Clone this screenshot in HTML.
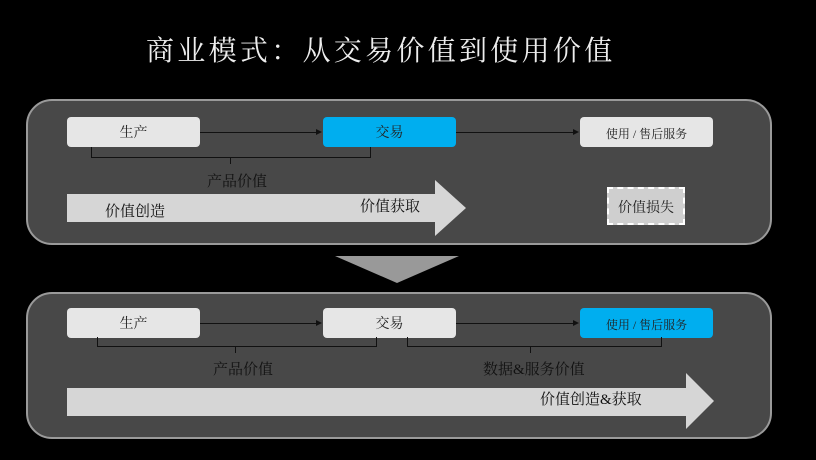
<!DOCTYPE html>
<html><head><meta charset="utf-8"><style>
body{margin:0;width:816px;height:460px;background:#000;position:relative;overflow:hidden;font-family:"Liberation Serif","Noto Serif CJK SC",serif;}
.a{position:absolute}
.title{left:146px;top:34px;width:480px;color:#eee;font-size:28px;letter-spacing:3.3px;line-height:36px;white-space:nowrap}
.panel{background:#484848;border:2px solid #9a9a9a;border-radius:26px}
.box{background:#e6e6e6;border-radius:4px;color:#222;font-size:14px;height:26px;padding-top:4px;width:133px;display:flex;align-items:center;justify-content:center;line-height:1}
.blue{background:#00aeef}
.ln{background:#111}
.t{color:#111;font-size:15px;white-space:nowrap;line-height:20px}
</style></head><body>
<div class="a title">商业模式：从交易价值到使用价值</div>

<div class="a panel" style="left:26px;top:99px;width:742px;height:142px"></div>
<div class="a box" style="left:67px;top:117px">生产</div>
<div class="a box blue" style="left:323px;top:117px">交易</div>
<div class="a box" style="left:580px;top:117px;font-size:12px">使用 / 售后服务</div>
<div class="a ln" style="left:200px;top:132px;width:118px;height:1px"></div>
<div class="a" style="left:316px;top:129px;border-left:6px solid #111;border-top:3.5px solid transparent;border-bottom:3.5px solid transparent"></div>
<div class="a ln" style="left:456px;top:132px;width:118px;height:1px"></div>
<div class="a" style="left:573px;top:129px;border-left:6px solid #111;border-top:3.5px solid transparent;border-bottom:3.5px solid transparent"></div>
<div class="a" style="left:91px;top:147px;width:278px;height:10px;border:1px solid #111;border-top:none"></div>
<div class="a ln" style="left:230px;top:157px;width:1px;height:7px"></div>
<div class="a t" style="left:207px;top:172px">产品价值</div>
<div class="a" style="left:67px;top:194px;width:369px;height:28px;background:#d6d6d6"></div>
<div class="a" style="left:435px;top:180px;border-left:31px solid #d6d6d6;border-top:28px solid transparent;border-bottom:28px solid transparent"></div>
<div class="a t" style="left:105px;top:202px">价值创造</div>
<div class="a t" style="left:360px;top:197px">价值获取</div>
<div class="a" style="left:607px;top:187px;width:74px;height:32px;padding-top:2px;background:#cfcfcf;border:2px dashed #fff;display:flex;align-items:center;justify-content:center;font-size:14px;color:#222">价值损失</div>

<div class="a" style="left:335px;top:256px;border-top:27px solid #999;border-left:62px solid transparent;border-right:62px solid transparent"></div>

<div class="a panel" style="left:26px;top:292px;width:742px;height:143px"></div>
<div class="a box" style="left:67px;top:308px">生产</div>
<div class="a box" style="left:323px;top:308px">交易</div>
<div class="a box blue" style="left:580px;top:308px;font-size:12px">使用 / 售后服务</div>
<div class="a ln" style="left:200px;top:323px;width:118px;height:1px"></div>
<div class="a" style="left:316px;top:320px;border-left:6px solid #111;border-top:3.5px solid transparent;border-bottom:3.5px solid transparent"></div>
<div class="a ln" style="left:456px;top:323px;width:118px;height:1px"></div>
<div class="a" style="left:573px;top:320px;border-left:6px solid #111;border-top:3.5px solid transparent;border-bottom:3.5px solid transparent"></div>
<div class="a" style="left:97px;top:337px;width:278px;height:9px;border:1px solid #111;border-top:none"></div>
<div class="a ln" style="left:235px;top:346px;width:1px;height:7px"></div>
<div class="a" style="left:407px;top:337px;width:253px;height:9px;border:1px solid #111;border-top:none"></div>
<div class="a ln" style="left:530px;top:346px;width:1px;height:7px"></div>
<div class="a t" style="left:213px;top:360px">产品价值</div>
<div class="a t" style="left:483px;top:360px">数据&amp;服务价值</div>
<div class="a" style="left:67px;top:388px;width:620px;height:28px;background:#d6d6d6"></div>
<div class="a" style="left:686px;top:373px;border-left:28px solid #d6d6d6;border-top:28px solid transparent;border-bottom:28px solid transparent"></div>
<div class="a t" style="left:540px;top:390px">价值创造&amp;获取</div>
</body></html>
